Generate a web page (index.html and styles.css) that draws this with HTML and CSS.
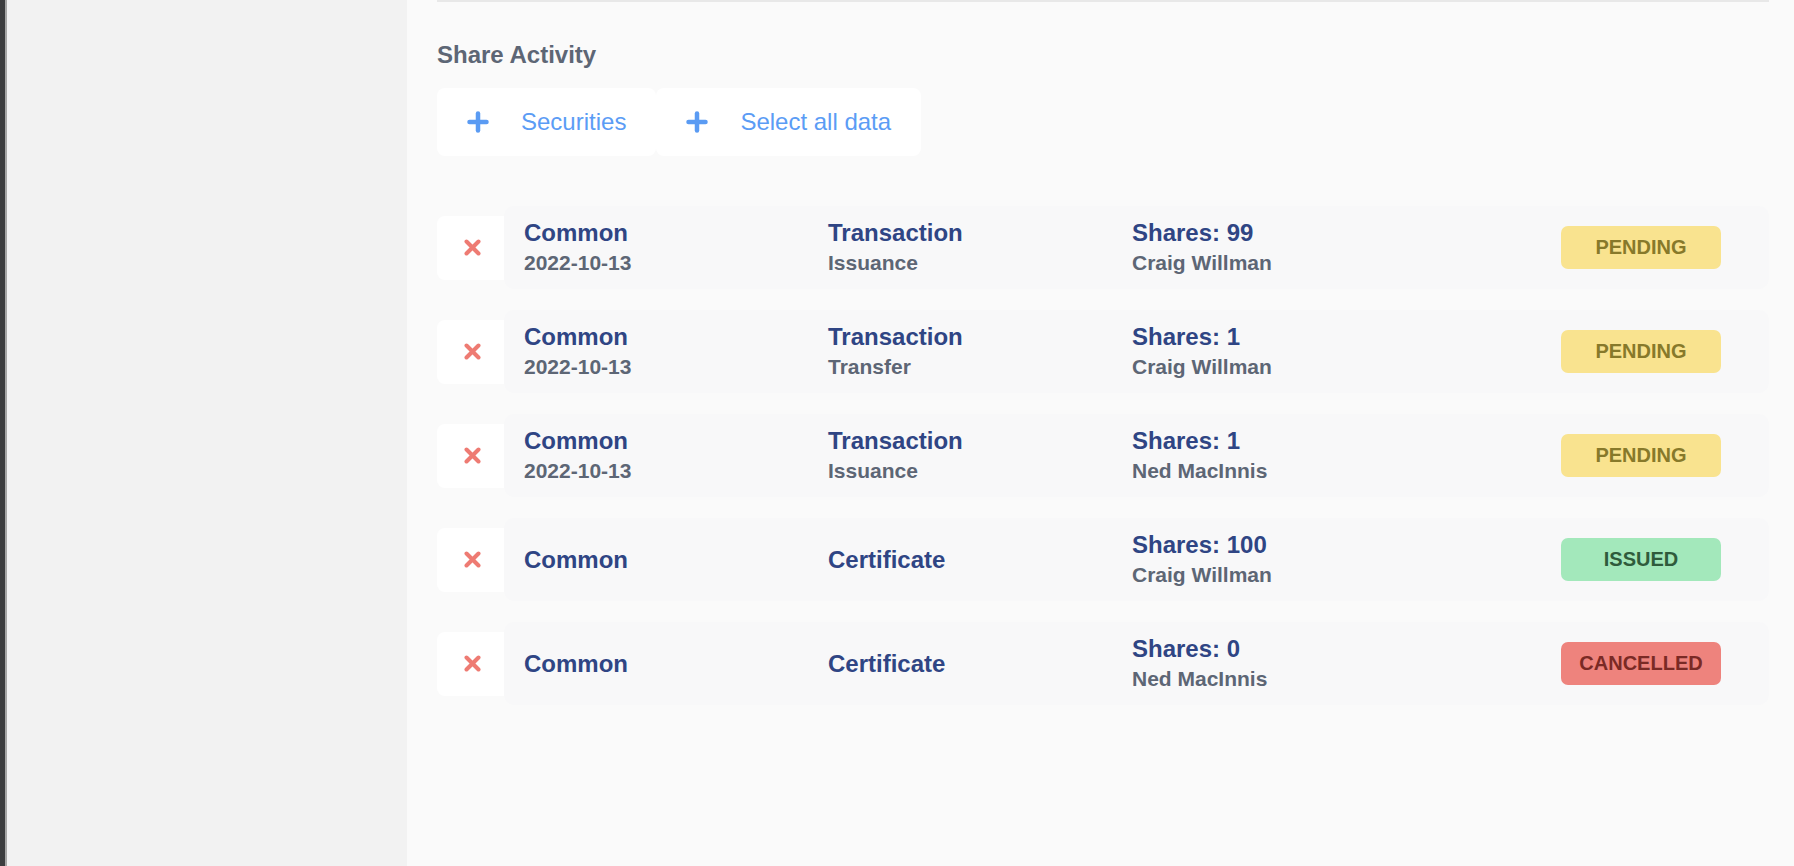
FILE: index.html
```html
<!DOCTYPE html>
<html lang="en">
<head>
    <meta charset="UTF-8">
    <title>Share Activity</title>
    <link rel="stylesheet" href="styles.css">
</head>
<body>
    <div class="frame-edge"></div>
    <aside class="sidebar"></aside>

    <main class="main-content">
        <div class="top-rule"></div>

        <h2 class="section-title">Share Activity</h2>

        <div class="action-bar">
            <button class="action-btn">
                <svg width="22" height="22" viewBox="0 0 22 22" fill="none" stroke="currentColor" stroke-width="4.5" stroke-linecap="round">
                    <line x1="11" y1="2.5" x2="11" y2="19.5"></line>
                    <line x1="2.5" y1="11" x2="19.5" y2="11"></line>
                </svg>
                Securities
            </button>
            <button class="action-btn">
                <svg width="22" height="22" viewBox="0 0 22 22" fill="none" stroke="currentColor" stroke-width="4.5" stroke-linecap="round">
                    <line x1="11" y1="2.5" x2="11" y2="19.5"></line>
                    <line x1="2.5" y1="11" x2="19.5" y2="11"></line>
                </svg>
                Select all data
            </button>
        </div>

        <div class="activity-list">
            <div class="activity-row">
                <button class="remove-btn" aria-label="Remove">
                    <svg width="17" height="17" viewBox="0 0 17 17" fill="none" stroke="currentColor" stroke-width="4" stroke-linecap="round">
                        <line x1="2.5" y1="2.5" x2="14.5" y2="14.5"></line>
                        <line x1="14.5" y1="2.5" x2="2.5" y2="14.5"></line>
                    </svg>
                </button>
                <div class="activity-card">
                    <div class="cell">
                        <div class="cell-title">Common</div>
                        <div class="cell-sub">2022-10-13</div>
                    </div>
                    <div class="cell">
                        <div class="cell-title">Transaction</div>
                        <div class="cell-sub">Issuance</div>
                    </div>
                    <div class="cell">
                        <div class="cell-title">Shares: 99</div>
                        <div class="cell-sub">Craig Willman</div>
                    </div>
                    <span class="status status-pending">PENDING</span>
                </div>
            </div>

            <div class="activity-row">
                <button class="remove-btn" aria-label="Remove">
                    <svg width="17" height="17" viewBox="0 0 17 17" fill="none" stroke="currentColor" stroke-width="4" stroke-linecap="round">
                        <line x1="2.5" y1="2.5" x2="14.5" y2="14.5"></line>
                        <line x1="14.5" y1="2.5" x2="2.5" y2="14.5"></line>
                    </svg>
                </button>
                <div class="activity-card">
                    <div class="cell">
                        <div class="cell-title">Common</div>
                        <div class="cell-sub">2022-10-13</div>
                    </div>
                    <div class="cell">
                        <div class="cell-title">Transaction</div>
                        <div class="cell-sub">Transfer</div>
                    </div>
                    <div class="cell">
                        <div class="cell-title">Shares: 1</div>
                        <div class="cell-sub">Craig Willman</div>
                    </div>
                    <span class="status status-pending">PENDING</span>
                </div>
            </div>

            <div class="activity-row">
                <button class="remove-btn" aria-label="Remove">
                    <svg width="17" height="17" viewBox="0 0 17 17" fill="none" stroke="currentColor" stroke-width="4" stroke-linecap="round">
                        <line x1="2.5" y1="2.5" x2="14.5" y2="14.5"></line>
                        <line x1="14.5" y1="2.5" x2="2.5" y2="14.5"></line>
                    </svg>
                </button>
                <div class="activity-card">
                    <div class="cell">
                        <div class="cell-title">Common</div>
                        <div class="cell-sub">2022-10-13</div>
                    </div>
                    <div class="cell">
                        <div class="cell-title">Transaction</div>
                        <div class="cell-sub">Issuance</div>
                    </div>
                    <div class="cell">
                        <div class="cell-title">Shares: 1</div>
                        <div class="cell-sub">Ned MacInnis</div>
                    </div>
                    <span class="status status-pending">PENDING</span>
                </div>
            </div>

            <div class="activity-row">
                <button class="remove-btn" aria-label="Remove">
                    <svg width="17" height="17" viewBox="0 0 17 17" fill="none" stroke="currentColor" stroke-width="4" stroke-linecap="round">
                        <line x1="2.5" y1="2.5" x2="14.5" y2="14.5"></line>
                        <line x1="14.5" y1="2.5" x2="2.5" y2="14.5"></line>
                    </svg>
                </button>
                <div class="activity-card">
                    <div class="cell">
                        <div class="cell-title">Common</div>
                    </div>
                    <div class="cell">
                        <div class="cell-title">Certificate</div>
                    </div>
                    <div class="cell">
                        <div class="cell-title">Shares: 100</div>
                        <div class="cell-sub">Craig Willman</div>
                    </div>
                    <span class="status status-issued">ISSUED</span>
                </div>
            </div>

            <div class="activity-row">
                <button class="remove-btn" aria-label="Remove">
                    <svg width="17" height="17" viewBox="0 0 17 17" fill="none" stroke="currentColor" stroke-width="4" stroke-linecap="round">
                        <line x1="2.5" y1="2.5" x2="14.5" y2="14.5"></line>
                        <line x1="14.5" y1="2.5" x2="2.5" y2="14.5"></line>
                    </svg>
                </button>
                <div class="activity-card">
                    <div class="cell">
                        <div class="cell-title">Common</div>
                    </div>
                    <div class="cell">
                        <div class="cell-title">Certificate</div>
                    </div>
                    <div class="cell">
                        <div class="cell-title">Shares: 0</div>
                        <div class="cell-sub">Ned MacInnis</div>
                    </div>
                    <span class="status status-cancelled">CANCELLED</span>
                </div>
            </div>
        </div>
    </main>
</body>
</html>
```

FILE: styles.css
```css
:root {
    --page-bg: #FAFAFA;
    --sidebar-bg: #F2F2F2;
    --card-bg: #F8F8F9;
    --white: #FFFFFF;
    --navy: #2F4584;
    --text-secondary: #5D6675;
    --blue: #5B9CF5;
    --red: #EE7B73;
    --rule: #E8E8E8;
}

* {
    box-sizing: border-box;
}

body {
    margin: 0;
    height: 100vh;
    display: flex;
    font-family: "Liberation Sans", Arial, sans-serif;
    background: var(--page-bg);
    overflow: hidden;
}

.frame-edge {
    width: 5px;
    flex-shrink: 0;
    background: #3C3D3F;
}

.sidebar {
    width: 402px;
    flex-shrink: 0;
    background: var(--sidebar-bg);
    border-left: 2px solid #A6A6A6;
}

.main-content {
    flex: 1;
    background: var(--page-bg);
    padding: 0 25px 0 30px;
}

.top-rule {
    height: 2px;
    background: var(--rule);
}

.section-title {
    margin: 38px 0 18px;
    font-size: 24px;
    line-height: 30px;
    font-weight: 700;
    color: var(--text-secondary);
}

.action-bar {
    display: flex;
}

.action-btn {
    height: 68px;
    padding: 0 30px;
    display: inline-flex;
    align-items: center;
    gap: 32px;
    border: none;
    border-radius: 8px;
    background: var(--white);
    color: var(--blue);
    font-family: inherit;
    font-size: 24px;
    line-height: 30px;
    cursor: pointer;
}

.action-btn svg {
    color: #5A9BF3;
}

.activity-list {
    margin-top: 50px;
    display: flex;
    flex-direction: column;
    gap: 21px;
}

.activity-row {
    display: flex;
    align-items: center;
}

.remove-btn {
    width: 67px;
    height: 64px;
    flex-shrink: 0;
    display: flex;
    align-items: center;
    justify-content: center;
    padding: 0 0 0 4px;
    border: none;
    border-radius: 8px 0 0 8px;
    background: var(--white);
    color: var(--red);
    cursor: pointer;
}

.activity-card {
    flex: 1;
    height: 83px;
    display: flex;
    align-items: center;
    padding: 0 48px 0 20px;
    background: var(--card-bg);
    border-radius: 10px;
}

.cell {
    width: 304px;
    flex-shrink: 0;
}

.cell-title {
    font-size: 24px;
    line-height: 30px;
    font-weight: 700;
    color: var(--navy);
}

.cell-sub {
    font-size: 21px;
    line-height: 30px;
    font-weight: 700;
    color: var(--text-secondary);
}

.status {
    margin-left: auto;
    width: 160px;
    height: 43px;
    display: flex;
    align-items: center;
    justify-content: center;
    border-radius: 7px;
    font-size: 20px;
    font-weight: 700;
}

.status-pending {
    background: #F9E38F;
    color: #87792A;
}

.status-issued {
    background: #A3E8BB;
    color: #2F5B3C;
}

.status-cancelled {
    background: #EE837D;
    color: #7A2A25;
}
```
